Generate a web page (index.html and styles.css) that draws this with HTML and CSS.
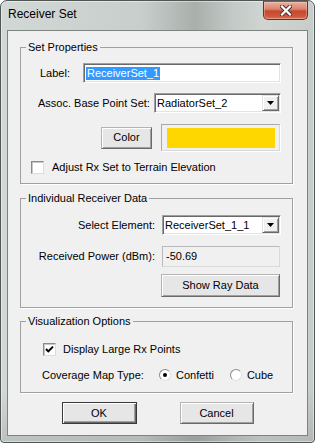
FILE: index.html
```html
<!DOCTYPE html>
<html lang="en">
<head>
    <meta charset="UTF-8">
    <title>Receiver Set</title>
    <link rel="stylesheet" href="styles.css">
</head>
<body>
    <div class="window">
        <div class="titlebar">
            <span class="title">Receiver Set</span>
            <span class="close">
                <svg width="12" height="11" viewBox="0 0 12 11">
                    <path d="M2 1.5 L10 9.5 M10 1.5 L2 9.5" stroke="#4a3530" stroke-width="4.2" stroke-linecap="square" fill="none"/>
                    <path d="M2 1.5 L10 9.5 M10 1.5 L2 9.5" stroke="#ffffff" stroke-width="2.2" stroke-linecap="square" fill="none"/>
                </svg>
            </span>
        </div>

        <div class="client">
            <fieldset class="group group-props">
                <legend>Set Properties</legend>
                <div class="row r-label">
                    <span>Label:</span>
                    <span class="textbox"><span class="selected">ReceiverSet_1</span></span>
                </div>
                <div class="row r-assoc">
                    <span>Assoc. Base Point Set:</span>
                    <span class="combo combo-wide">
                        <span class="combo-text">RadiatorSet_2</span>
                        <span class="combo-btn"><svg width="7" height="4" viewBox="0 0 7 4"><path d="M0 0 H7 L3.5 4 Z" fill="#000"/></svg></span>
                    </span>
                </div>
                <div class="row r-color">
                    <span class="btn btn-color">Color</span>
                    <span class="swatch"><span class="swatch-fill"></span></span>
                </div>
                <div class="row r-adjust">
                    <span class="check"></span>
                    <span>Adjust Rx Set to Terrain Elevation</span>
                </div>
            </fieldset>

            <fieldset class="group group-data">
                <legend>Individual Receiver Data</legend>
                <div class="row r-select">
                    <span>Select Element:</span>
                    <span class="combo combo-narrow">
                        <span class="combo-text">ReceiverSet_1_1</span>
                        <span class="combo-btn"><svg width="7" height="4" viewBox="0 0 7 4"><path d="M0 0 H7 L3.5 4 Z" fill="#000"/></svg></span>
                    </span>
                </div>
                <div class="row r-power">
                    <span>Received Power (dBm):</span>
                    <span class="readonly">-50.69</span>
                </div>
                <div class="row r-ray">
                    <span class="btn btn-ray">Show Ray Data</span>
                </div>
            </fieldset>

            <fieldset class="group group-vis">
                <legend>Visualization Options</legend>
                <div class="row r-large">
                    <span class="check">
                        <svg width="11" height="11" viewBox="0 0 11 11"><path d="M2 5 L4.3 7.4 L9 2.6" stroke="#000" stroke-width="2" fill="none"/></svg>
                    </span>
                    <span>Display Large Rx Points</span>
                </div>
                <div class="row r-cov">
                    <span class="cov-label">Coverage Map Type:</span>
                    <span class="radio radio-on"></span>
                    <span class="radio-text">Confetti</span>
                    <span class="radio radio-second"></span>
                    <span class="radio-text">Cube</span>
                </div>
            </fieldset>

            <div class="actions">
                <span class="btn btn-default">OK</span>
                <span class="btn btn-cancel">Cancel</span>
            </div>
        </div>
    </div>
</body>
</html>
```

FILE: styles.css
```css
html,
body {
    margin: 0px;
    padding: 0px;
}

body {
    width: 315px;
    height: 443px;
    overflow: hidden;
    font-family: "Liberation Sans", Arial, sans-serif;
    font-size: 11px;
    line-height: 13px;
    color: #000;
}

.window {
    box-sizing: border-box;
    width: 315px;
    height: 443px;
    display: flex;
    flex-direction: column;
    padding: 0 6px 6px 6px;
    border: 1px solid #4f5654;
    border-radius: 7px 7px 4px 4px;
    background:
        linear-gradient(to bottom, rgba(0, 0, 0, 0) 88%, rgba(0, 0, 0, 0.1)),
        linear-gradient(to right, #d2d8d5 0%, #c8cecb 45%, #a9b0ac 62%, #c3c9c6 74%, #d0d5d2 84%, #c6ccc9 100%);
    box-shadow: inset 0 0 0 1px rgba(255, 255, 255, 0.45);
}

.titlebar {
    height: 29px;
    display: flex;
    align-items: flex-start;
    flex-shrink: 0;
}

.title {
    padding: 6px 0 0 1px;
    font-size: 12px;
    line-height: 15px;
    color: #000;
}

.close {
    box-sizing: border-box;
    width: 45px;
    height: 19px;
    margin-left: auto;
    display: flex;
    align-items: center;
    justify-content: center;
    border: 1px solid #6b2e25;
    border-top-color: #8a5a52;
    border-radius: 0 0 5px 5px;
    background: linear-gradient(to bottom, #e9b0a2 0%, #dc8670 40%, #c8472d 55%, #cf5a3e 85%, #d97a5e 100%);
    box-shadow: inset 0 0 0 1px rgba(255, 220, 210, 0.35);
}

.client {
    flex: 1;
    display: flex;
    flex-direction: column;
    padding-top: 10px;
    border: 1px solid #7d8480;
    background-color: #f0f0f0;
}

.group {
    margin: 0 14px 0 12px;
    padding: 0 11px 0 0;
    min-width: 0;
    border: 1px solid #a0a0a0;
    box-shadow: 1px 1px 0 #fff;
}

.group legend {
    margin-left: 5px;
    padding: 0 2px;
    line-height: 13px;
}

.group-props {
    padding-bottom: 9px;
}

.group-data {
    margin-top: 8px;
    padding-bottom: 10px;
}

.group-vis {
    margin-top: 7px;
    padding-bottom: 10px;
}

.row {
    display: flex;
    align-items: center;
}

/* Set Properties */
.r-label {
    margin-top: 9px;
    height: 20px;
    padding-left: 19px;
}

.r-assoc {
    margin-top: 10px;
    height: 20px;
    padding-left: 17px;
}

.r-color {
    margin-top: 11px;
    height: 27px;
    justify-content: flex-end;
    gap: 9px;
}

.r-adjust {
    margin-top: 10px;
    height: 13px;
    padding-left: 10px;
    gap: 8px;
}

/* Individual Receiver Data */
.r-select,
.r-power,
.r-ray {
    justify-content: flex-end;
    gap: 7px;
}

.r-select {
    margin-top: 10px;
    height: 20px;
}

.r-power {
    margin-top: 11px;
    height: 21px;
}

.r-ray {
    margin-top: 7px;
    height: 23px;
}

/* Visualization Options */
.r-large {
    margin-top: 15px;
    height: 13px;
    padding-left: 22px;
    gap: 7px;
}

.r-cov {
    margin-top: 12px;
    height: 14px;
    padding-left: 21px;
}

.cov-label {
    width: 117px;
    flex-shrink: 0;
}

/* controls */
.textbox {
    box-sizing: border-box;
    width: 198px;
    height: 20px;
    margin-left: auto;
    display: flex;
    align-items: center;
    padding-left: 2px;
    border: 1px solid;
    border-color: #a0a0a0 #fff #fff #a0a0a0;
    box-shadow: inset 1px 1px 0 #696969, inset -1px -1px 0 #e3e3e3;
    background-color: #fff;
}

.selected {
    padding: 0 1px;
    background-color: #3399ff;
    color: #fff;
}

.combo {
    box-sizing: border-box;
    height: 20px;
    display: flex;
    align-items: center;
    padding: 1px;
    border: 1px solid;
    border-color: #a0a0a0 #fff #fff #a0a0a0;
    box-shadow: inset 1px 1px 0 #696969, inset -1px -1px 0 #e3e3e3;
    background-color: #fff;
}

.combo-wide {
    width: 127px;
    margin-left: auto;
}

.combo-narrow {
    width: 119px;
}

.combo-text {
    flex: 1;
    padding-left: 1px;
}

.combo-btn {
    box-sizing: border-box;
    width: 17px;
    height: 16px;
    display: flex;
    align-items: center;
    justify-content: center;
    border: 1px solid;
    border-color: #e3e3e3 #696969 #696969 #e3e3e3;
    box-shadow: inset 1px 1px 0 #fff, inset -1px -1px 0 #a0a0a0;
    background-color: #f0f0f0;
}

.btn {
    box-sizing: border-box;
    display: flex;
    align-items: center;
    justify-content: center;
    border: 1px solid;
    border-color: #b4b4b4 #696969 #696969 #b4b4b4;
    box-shadow: inset 1px 1px 0 #fff, inset -1px -1px 0 #a0a0a0;
    background-color: #e6e6e6;
}

.btn-color {
    width: 51px;
    height: 22px;
}

.btn-ray {
    width: 119px;
    height: 23px;
    margin-right: 1px;
}

.swatch {
    box-sizing: border-box;
    width: 119px;
    height: 27px;
    margin-right: 1px;
    padding: 3px 4px 2px 5px;
    border: 1px solid;
    border-color: #a9a9a9 #d8d8d8 #d8d8d8 #a9a9a9;
    box-shadow: 1px 1px 0 #fff;
    display: flex;
}

.swatch-fill {
    flex: 1;
    background-color: #ffd700;
}

.readonly {
    box-sizing: border-box;
    width: 118px;
    height: 21px;
    margin-right: 1px;
    padding-left: 3px;
    display: flex;
    align-items: center;
    border: 1px solid;
    border-color: #b9b9b9 #dadada #dadada #b9b9b9;
    background-color: #f0f0f0;
}

.check {
    box-sizing: border-box;
    width: 13px;
    height: 13px;
    flex-shrink: 0;
    display: flex;
    align-items: center;
    justify-content: center;
    border: 1px solid;
    border-color: #8a8a8a #dcdcdc #dcdcdc #8a8a8a;
    box-shadow: inset 1px 1px 0 #c8c8c8;
    background-color: #fff;
}

.radio {
    box-sizing: border-box;
    width: 12px;
    height: 12px;
    flex-shrink: 0;
    display: flex;
    align-items: center;
    justify-content: center;
    border: 1px solid;
    border-color: #8a8a8a #e0e0e0 #e0e0e0 #8a8a8a;
    border-radius: 50%;
    background-color: #fff;
}

.radio-on::after {
    content: "";
    width: 4px;
    height: 4px;
    border-radius: 50%;
    background-color: #000;
}

.radio-text {
    margin-left: 5px;
}

.radio-second {
    margin-left: 16px;
}

.actions {
    margin-top: 9px;
    display: flex;
    justify-content: center;
    gap: 43px;
}

.btn-default {
    width: 75px;
    height: 22px;
    border-color: #3a3a3a;
    box-shadow: inset 1px 1px 0 #fff, inset -1px -1px 0 #696969, inset -2px -2px 0 #a0a0a0;
}

.btn-cancel {
    width: 74px;
    height: 22px;
}
```
